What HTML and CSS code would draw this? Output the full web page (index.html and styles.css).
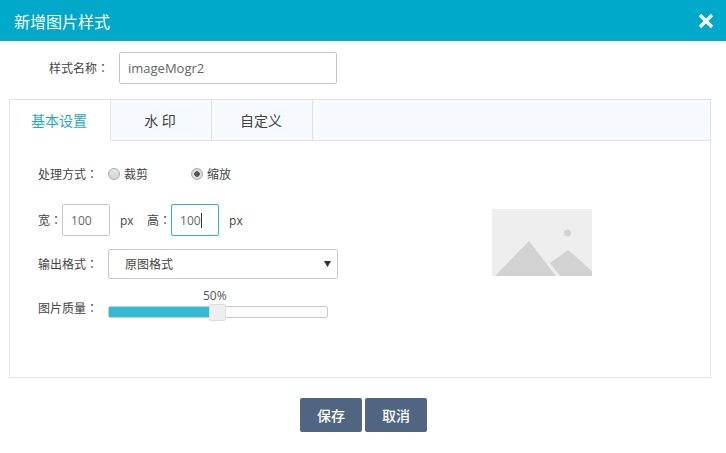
FILE: index.html
```html
<!DOCTYPE html>
<html lang="zh">
<head>
<meta charset="utf-8">
<title>新增图片样式</title>
<link rel="stylesheet" href="styles.css">
</head>
<body>
<div class="dialog">
  <header class="head">
    <h1 class="title">新增图片样式</h1>
    <svg class="close" width="16" height="16" viewBox="0 0 16 16"><path d="M2 2L14 14M14 2L2 14" stroke="#fff" stroke-width="3.2" fill="none"/></svg>
  </header>
  <div class="name-row">
    <span class="name-label">样式名称<span class="colon" lang="zh-TW">：</span></span>
    <div class="field name-input">imageMogr2</div>
  </div>
  <section class="panel">
    <nav class="tabs">
      <div class="tab active">基本设置</div>
      <div class="tab">水 印</div>
      <div class="tab">自定义</div>
      <div class="tab-fill"></div>
    </nav>
    <div class="body">
      <div class="form">
        <div class="row radios">
          <span class="label">处理方式<span class="colon" lang="zh-TW">：</span></span>
          <span class="radio"></span><span class="radio-text first">裁剪</span>
          <span class="radio checked"></span><span class="radio-text">缩放</span>
        </div>
        <div class="row sizes">
          <span class="short">宽<span class="colon" lang="zh-TW">：</span></span>
          <div class="field size">100</div>
          <span class="unit">px</span>
          <span class="short">高<span class="colon" lang="zh-TW">：</span></span>
          <div class="field size focus">100<i class="caret"></i></div>
          <span class="unit">px</span>
        </div>
        <div class="row format">
          <span class="label">输出格式<span class="colon" lang="zh-TW">：</span></span>
          <div class="select">原图格式<svg class="arrow" width="7" height="6" viewBox="0 0 7 6"><path d="M0 0H7L3.500 6Z" fill="#333"/></svg></div>
        </div>
        <div class="row quality">
          <span class="label">图片质量<span class="colon" lang="zh-TW">：</span></span>
          <div class="slider">
            <span class="value">50%</span>
            <div class="track"><div class="fill"></div></div>
            <div class="thumb"></div>
          </div>
        </div>
      </div>
      <svg class="preview" width="100" height="67" viewBox="0 0 100 67">
        <rect width="100" height="67" fill="#eee"/>
        <circle cx="75.500" cy="24" r="3.500" fill="#d2d2d2"/>
        <path d="M3 67L37 32L64 67Z" fill="#d2d2d2"/>
        <path d="M58 54L76 41L100 62V67H68Z" fill="#d2d2d2"/>
      </svg>
    </div>
  </section>
  <footer class="actions">
    <button class="btn">保存</button>
    <button class="btn">取消</button>
  </footer>
</div>
</body>
</html>
```
FILE: styles.css
```css
* { box-sizing: border-box; }
html, body { margin: 0; padding: 0; background: #fff; }
body {
  width: 726px;
  height: 453px;
  overflow: hidden;
  font-family: "Open Sans", "Noto Sans CJK SC", sans-serif;
  font-size: 12px;
  color: #444;
}
.colon { font-family: "Noto Sans CJK TC", sans-serif; }
.head {
  height: 41px;
  background: #00a9c9;
  display: flex;
  align-items: center;
  justify-content: space-between;
  padding: 0 12px 0 14px;
}
.title { margin: 0; font-size: 16px; font-weight: 400; color: #fff; }
.name-row {
  display: flex;
  align-items: center;
  height: 32px;
  margin-top: 11px;
  padding-left: 49px;
}
.name-label { width: 70px; }
.field {
  height: 32px;
  border: 1px solid #c8c8c8;
  border-radius: 2px;
  background: #fff;
  display: flex;
  align-items: center;
  font-size: 12px;
  color: #666;
}
.name-input { width: 218px; padding-left: 8px; font-size: 13px; }
.panel {
  width: 702px;
  height: 279px;
  margin: 15px 0 0 9px;
  border: 1px solid #dfe2e8;
  display: flex;
  flex-direction: column;
}
.tabs { display: flex; height: 41px; flex: none; }
.tab {
  width: 101px;
  display: flex;
  align-items: center;
  justify-content: center;
  font-size: 14px;
  color: #444;
  background: #f6f9fe;
  border-right: 1px solid #dfe2e8;
  border-bottom: 1px solid #dfe2e8;
  padding-right: 2px;
}
.tab.active { background: #fff; color: #1ea9c6; border-bottom-color: #fff; }
.tab-fill { flex: 1; background: #f6f9fe; border-bottom: 1px solid #dfe2e8; }
.body { flex: 1; display: flex; padding-left: 28px; }
.form { width: 454px; flex: none; padding-top: 22px; }
.row { display: flex; align-items: center; }
.label { width: 70px; flex: none; }
.radios { height: 22px; }
.radio {
  width: 12px;
  height: 12px;
  border-radius: 50%;
  border: 1px solid #aaa;
  background: linear-gradient(#e6e6e6, #d4d4d4);
  flex: none;
}
.radio.checked { background: radial-gradient(circle, #555 0 2.500px, #dcdcdc 3px); }
.radio-text { margin-left: 4px; }
.radio-text.first { margin-right: 43px; }
.sizes { margin-top: 19px; }
.short { flex: none; }
.size { width: 48px; padding-left: 8px; }
.focus { border-color: #2fb5cc; }
.caret { display: inline-block; width: 1px; height: 15px; background: #333; }
.unit { width: 37px; padding-left: 10px; flex: none; }
.format { margin-top: 13px; }
.select {
  width: 230px;
  height: 30px;
  border: 1px solid #c8c8c8;
  border-radius: 2px;
  display: flex;
  align-items: center;
  justify-content: space-between;
  padding: 0 6px 0 16px;
}
.quality { margin-top: 20px; align-items: flex-start; }
.slider { position: relative; width: 220px; height: 12px; margin-top: 7px; }
.value { position: absolute; left: 95px; top: -19px; color: #555; }
.track {
  width: 220px;
  height: 12px;
  border: 1px solid #c9c7d8;
  border-radius: 2px;
  overflow: hidden;
}
.fill { width: 102px; height: 100%; background: #33bbd3; }
.thumb {
  position: absolute;
  left: 101px;
  top: -2px;
  width: 17px;
  height: 17px;
  background: #eee;
  border: 1px solid #ddd;
  border-radius: 2px;
}
.preview { margin-top: 68px; flex: none; }
.actions {
  display: flex;
  gap: 3px;
  margin-top: 20px;
  padding-left: 300px;
}
.btn {
  width: 62px;
  height: 34px;
  border: 0;
  border-radius: 2px;
  background: #4f6582;
  color: #fff;
  font-family: inherit;
  font-size: 14px;
  font-weight: 500;
  padding: 0;
}
```
